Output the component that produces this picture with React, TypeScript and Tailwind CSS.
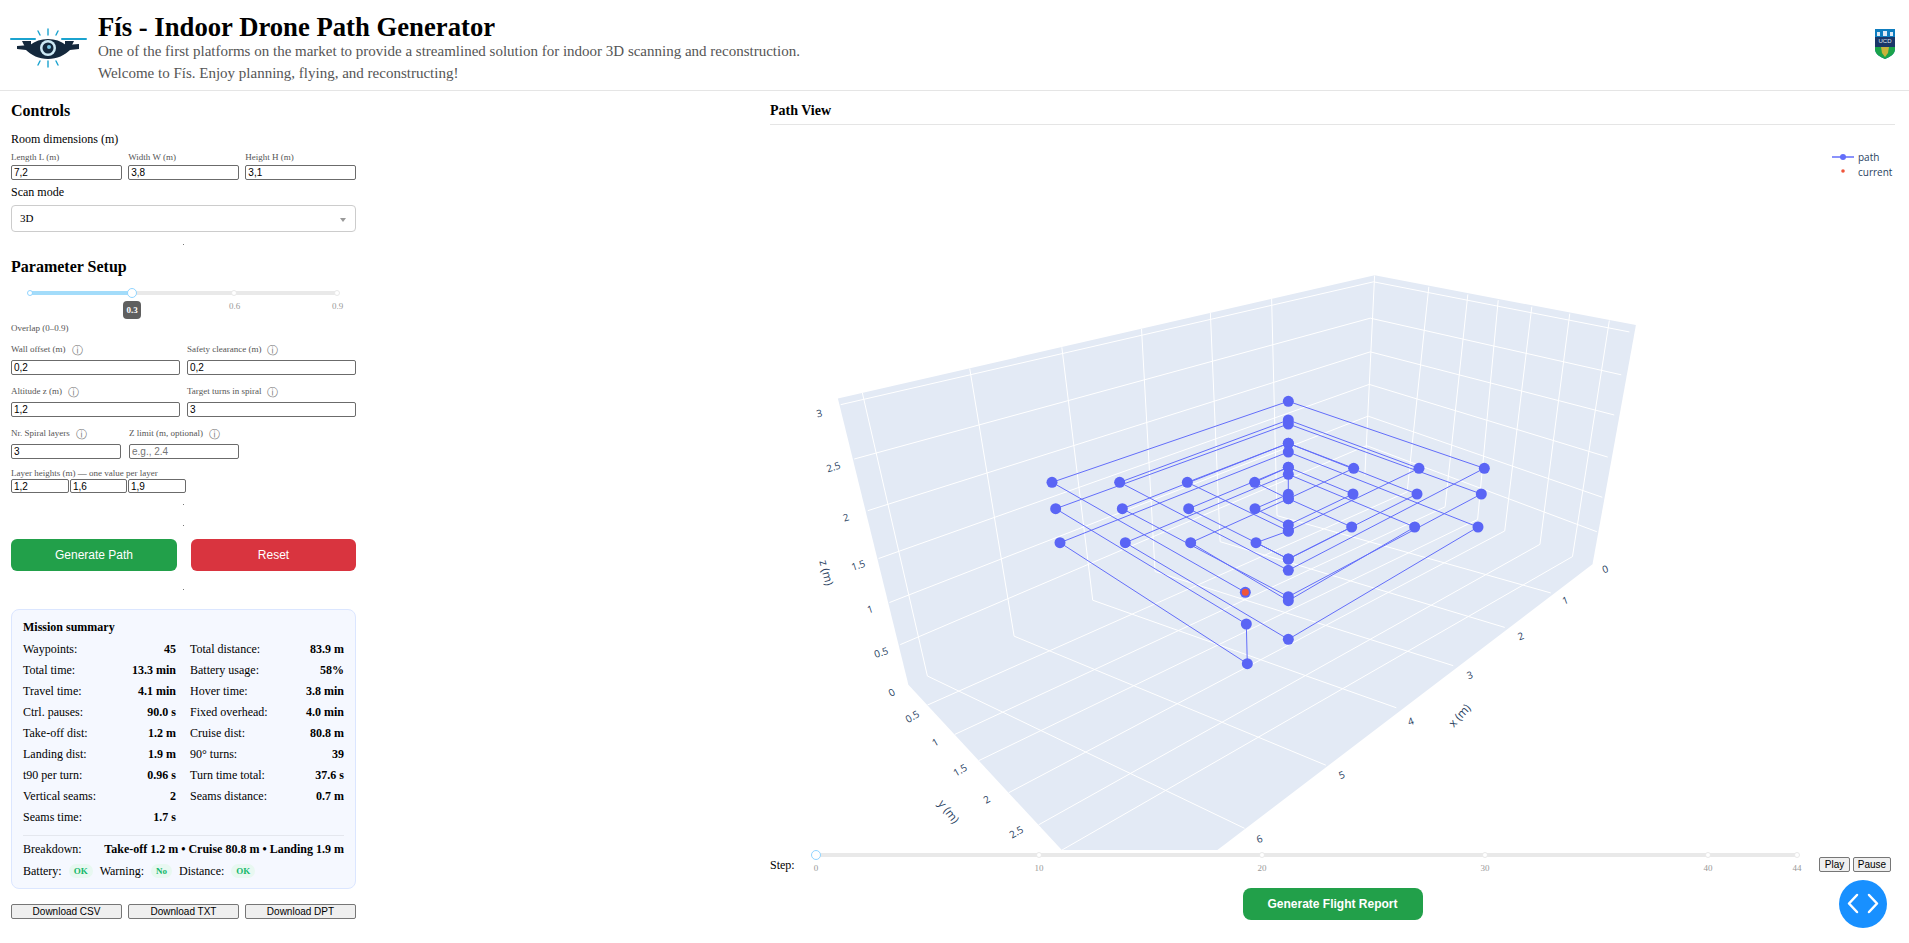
const zx = (x: number) => 800 + x / 1.8447;
const zy = (y: number) => 260 + y / 2.613;
const pts = (list: number[][]) => list.map(([x, y]) => `${zx(x).toFixed(1)},${zy(y).toFixed(1)}`).join(" ");
// spiral coordinates were read off the 3x crop of the plot
const px = (x: number) => 1000 + x / 3;
const py = (y: number) => 380 + y / 3;

const outline = [[70, 362], [1060, 40], [1542, 170], [1462, 795], [770, 1542], [483, 1542], [200, 1110]];
const back = [1042, 563];

const leftWallZ = [[[75, 378], [1058, 57]], [[100, 520], [1052, 152]], [[125, 655], [1052, 240]], [[145, 780], [1050, 325]], [[165, 895], [1048, 408]], [[185, 1005], [1045, 485]]];
const rightWallZ = [[[1058, 57], [1530, 188]], [[1052, 152], [1515, 300]], [[1052, 240], [1502, 405]], [[1050, 325], [1490, 515]], [[1048, 408], [1480, 620]], [[1045, 485], [1470, 710]]];
const leftWallV = [[[870, 100], [880, 668]], [[757, 138], [775, 736]], [[630, 180], [655, 814]], [[483, 228], [540, 889]], [[313, 283], [395, 983]], [[115, 347], [235, 1087]]];
const rightWallV = [[[1160, 70], [1120, 606]], [[1232, 90], [1190, 645]], [[1288, 105], [1250, 678]], [[1350, 122], [1300, 708]], [[1420, 140], [1365, 743]], [[1493, 158], [1425, 775]]];
const floorX = [[[880, 668], [1385, 870]], [[775, 736], [1300, 960]], [[655, 814], [1205, 1060]], [[540, 889], [1100, 1170]], [[395, 983], [970, 1320]], [[235, 1087], [820, 1485]]];
const floorY = [[[1120, 606], [235, 1163]], [[1190, 645], [285, 1240]], [[1250, 678], [330, 1308]], [[1300, 708], [385, 1392]], [[1365, 743], [440, 1476]], [[1425, 775], [483, 1542]]];
const gridLines = [...leftWallZ, ...rightWallZ, ...leftWallV, ...rightWallV, ...floorX, ...floorY, [[1060, 40], back]];

const top = [[736, 637], [156, 307], [865, 64], [1453, 265], [865, 571], [359, 307], [865, 120], [1257, 265], [865, 453], [562, 307], [865, 190], [1061, 265], [865, 356], [764, 307], [865, 262]];
const mid = [[865, 343], [765, 386], [865, 435], [1059, 342], [865, 262], [566, 386], [865, 537], [1251, 342], [865, 190], [367, 386], [865, 650], [1444, 342], [865, 132], [167, 386], [739, 732]];
const low = [[742, 851], [180, 488], [865, 216], [1434, 441], [865, 778], [376, 488], [865, 283], [1244, 441], [865, 662], [572, 488], [865, 356], [1055, 441], [865, 537], [768, 488], [865, 453]];
const path = [...top, ...mid, ...low];

const ticks: [string, number, number, number][] = [
  ["3", 36, 403, -12], ["2.5", 62, 543, -18], ["2", 85, 675, -18], ["1.5", 108, 800, -18], ["1", 130, 915, -18], ["0.5", 150, 1028, -18],
  ["0", 170, 1132, -30], ["0.5", 208, 1195, -30], ["1", 250, 1262, -30], ["1.5", 296, 1335, -30], ["2", 345, 1412, -30], ["2.5", 400, 1497, -30],
  ["0", 1486, 810, -20], ["1", 1412, 892, -20], ["2", 1330, 985, -20], ["3", 1236, 1087, -20], ["4", 1127, 1208, -20], ["5", 1000, 1348, -20], ["6", 848, 1515, -20],
];

function Plot() {
  return (
    <svg viewBox="770 125 1125 727" className="block w-[1125px] h-[727px]" style={{ fontFamily: "'Open Sans', sans-serif" }}>
      <defs>
        <clipPath id="scene">
          <polygon points={pts(outline)} />
        </clipPath>
      </defs>
      <polygon points={pts(outline)} fill="#e3eaf5" />
      <g clipPath="url(#scene)" stroke="#fff" strokeWidth="1" fill="none">
        {gridLines.map((l, i) => (
          <line key={i} x1={zx(l[0][0])} y1={zy(l[0][1])} x2={zx(l[1][0])} y2={zy(l[1][1])} />
        ))}
      </g>
      <polyline points={path.map(([x, y]) => `${px(x).toFixed(1)},${py(y).toFixed(1)}`).join(" ")} fill="none" stroke="#636efa" strokeWidth="1" />
      {path.map(([x, y], i) => (
        <circle key={i} cx={px(x)} cy={py(y)} r="5.500" fill="#5a65f5" />
      ))}
      <circle cx={px(736)} cy={py(637)} r="3.500" fill="#ef553b" />
      {ticks.map(([t, x, y, r], i) => (
        <text key={i} x={zx(x)} y={zy(y)} fontSize="10" fill="#2a3f5f" textAnchor="middle" dominantBaseline="middle" transform={`rotate(${r} ${zx(x)} ${zy(y)})`}>
          {t}
        </text>
      ))}
      <text x={zx(47)} y={zy(818)} fontSize="11.5" fill="#2a3f5f" textAnchor="middle" dominantBaseline="middle" transform={`rotate(75 ${zx(47)} ${zy(818)})`}>z (m)</text>
      <text x={zx(273)} y={zy(1443)} fontSize="11.5" fill="#2a3f5f" textAnchor="middle" dominantBaseline="middle" transform={`rotate(52 ${zx(273)} ${zy(1443)})`}>y (m)</text>
      <text x={zx(1218)} y={zy(1192)} fontSize="11.5" fill="#2a3f5f" textAnchor="middle" dominantBaseline="middle" transform={`rotate(-48 ${zx(1218)} ${zy(1192)})`}>x (m)</text>
      <line x1="1832" y1="157" x2="1854" y2="157" stroke="#636efa" strokeWidth="1.5" />
      <circle cx="1843" cy="157" r="3" fill="#636efa" />
      <text x="1858" y="161" fontSize="10" fill="#2a3f5f">path</text>
      <circle cx="1843" cy="171" r="1.8" fill="#ef553b" />
      <text x="1858" y="175.500" fontSize="10" fill="#2a3f5f">current</text>
    </svg>
  );
}

function Logo() {
  return (
    <svg viewBox="10 15 110 65" className="w-[110px] h-[65px] shrink-0" aria-label="Fís logo">
      <g stroke="#1ba3cf" strokeWidth="1.4" strokeLinecap="round">
        <path d="M21 39H45M72 39H96" strokeWidth="2" />
        <path d="M58 29v6M48 31l2 4M68 31l-2 4M58 61v6M48 65l2-4M68 65l-2-4M41 49l-3 1M75 49l3 1" />
      </g>
      <path d="M27 46l13-1c5-4 11-6 18-6s13 2 18 6l13-1v5l-9 1c-5 5-13 9-22 9s-17-4-22-9l-9-1z" fill="#14283c" />
      <path d="M32 41h9v6h-6zM84 41h-9v6h6z" fill="#14283c" />
      <circle cx="58" cy="48" r="8" fill="#cfeaf5" />
      <circle cx="58" cy="48" r="5.500" fill="#14283c" />
      <circle cx="59" cy="47" r="2" fill="#7cc8e4" />
    </svg>
  );
}

function Crest() {
  return (
    <svg viewBox="0 0 20 30" className="w-5 h-[30px] shrink-0" aria-label="UCD crest">
      <path d="M0 0H20V20C20 26 14 28 10 30C6 28 0 26 0 20Z" fill="#0f7dbf" />
      <rect y="8" width="20" height="10" fill="#1a3668" />
      <path d="M0 18H20V20C20 26 14 28 10 30C6 28 0 26 0 20Z" fill="#1ba34a" />
      <path d="M2 7V3h3v4zM8 7V2h4v5zM15 7V3h3v4z" fill="#dfeaf5" />
      <text x="10" y="14" fontSize="6" fill="#dfe7f2" textAnchor="middle" fontFamily="'Liberation Sans', sans-serif">UCD</text>
      <path d="M6 18h8l-1 6-3 4-3-4z" fill="#c9b33a" />
    </svg>
  );
}

function NumInput({ value, placeholder, className }: { value?: string; placeholder?: string; className: string }) {
  return (
    <input
      readOnly
      defaultValue={value}
      placeholder={placeholder}
      className={`block border border-[#6b6b6b] rounded-[2px] bg-white px-[2px] font-['Liberation_Sans',sans-serif] text-[10px] text-black placeholder:text-[#757575] outline-none ${className}`}
    />
  );
}

function Info() {
  return <span className="ml-[6px] text-[11px] text-[#777] leading-none">ⓘ</span>;
}

function Dot() {
  return <div className="h-[2px] flex justify-center w-[345px]"><span className="w-px h-px bg-[#777]" /></div>;
}

function Field({ label, value, placeholder, width }: { label: string; value?: string; placeholder?: string; width: string }) {
  return (
    <div>
      <div className="h-[16px] flex items-center text-[9px] text-[#555] whitespace-nowrap">
        {label}
        <Info />
      </div>
      <NumInput value={value} placeholder={placeholder} className={`mt-[2px] h-[15px] ${width}`} />
    </div>
  );
}

const rows = [
  ["Waypoints:", "45", "Total distance:", "83.9 m"],
  ["Total time:", "13.3 min", "Battery usage:", "58%"],
  ["Travel time:", "4.1 min", "Hover time:", "3.8 min"],
  ["Ctrl. pauses:", "90.0 s", "Fixed overhead:", "4.0 min"],
  ["Take-off dist:", "1.2 m", "Cruise dist:", "80.8 m"],
  ["Landing dist:", "1.9 m", "90° turns:", "39"],
  ["t90 per turn:", "0.96 s", "Turn time total:", "37.6 s"],
  ["Vertical seams:", "2", "Seams distance:", "0.7 m"],
  ["Seams time:", "1.7 s", "", ""],
];

function Badge({ children }: { children: string }) {
  return <span className="mx-[7px] px-[5px] h-[14px] leading-[14px] rounded-full bg-[#e8f8f1] text-[#12b76a] text-[9px] font-bold">{children}</span>;
}

function Summary() {
  return (
    <div className="mt-[18px] w-[345px] h-[280px] rounded-lg border border-[#dbe6ff] bg-[#f5f8ff] px-[11px] pt-[9px] text-[12px] text-black">
      <div className="font-bold h-[16px] leading-[16px]">Mission summary</div>
      <div className="mt-[3.500px] grid grid-cols-[153px_154px] gap-x-[14px]">
        {rows.map((r) => (
          <div key={r[0]} className="contents">
            <div className="h-[21px] flex justify-between items-center">
              <span>{r[0]}</span>
              <b>{r[1]}</b>
            </div>
            <div className="h-[21px] flex justify-between items-center">
              <span>{r[2]}</span>
              <b>{r[3]}</b>
            </div>
          </div>
        ))}
      </div>
      <div className="mt-[7.500px] h-px bg-[#e4e7ee]" />
      <div className="mt-[4px] h-[18px] flex justify-between items-center">
        <span>Breakdown:</span>
        <b>Take-off 1.2 m • Cruise 80.8 m • Landing 1.9 m</b>
      </div>
      <div className="mt-[4px] h-[18px] flex items-center">
        <span>Battery:</span>
        <Badge>OK</Badge>
        <span>Warning:</span>
        <Badge>No</Badge>
        <span>Distance:</span>
        <Badge>OK</Badge>
      </div>
    </div>
  );
}

function Controls() {
  return (
    <div className="w-[345px]">
      <h2 className="text-[16px] font-bold leading-[20px] pt-[10px] box-content">Controls</h2>
      <p className="mt-[10px] text-[12px] leading-[16px]">Room dimensions (m)</p>
      <div className="mt-[3px] flex gap-[6.500px]">
        {[["Length L (m)", "7,2"], ["Width W (m)", "3,8"], ["Height H (m)", "3,1"]].map(([l, v]) => (
          <div key={l} className="flex-1">
            <div className="h-[14px] leading-[14px] text-[9px] text-[#555]">{l}</div>
            <NumInput value={v} className="w-full mt-[1px] h-[15px]" />
          </div>
        ))}
      </div>
      <p className="mt-[4px] text-[12px] leading-[16px]">Scan mode</p>
      <div className="mt-[5px] h-[27px] border border-[#ccc] rounded flex items-center justify-between pl-[8px] pr-[9px] text-[11px] font-normal">
        <span>3D</span>
        <span className="w-0 h-0 border-x-[3px] border-x-transparent border-t-[4px] border-t-[#999] mt-[2px]" />
      </div>
      <div className="mt-[12px]"><Dot /></div>
      <h2 className="mt-[11px] text-[16px] font-bold leading-[20px]">Parameter Setup</h2>
      <div className="relative mt-[11px] h-[50px] text-[9px] leading-[12px] text-[#999]">
        <div className="absolute left-[19px] w-[307px] top-[3px] h-[4px] rounded bg-[#e9e9e9]" />
        <div className="absolute left-[19px] w-[102px] top-[3px] h-[4px] rounded bg-[#a3dcfa]" />
        <div className="absolute left-[16px] top-[2px] w-[6px] h-[6px] rounded-full border border-[#91d5ff] bg-white" />
        <div className="absolute left-[220px] top-[2px] w-[6px] h-[6px] rounded-full border border-[#e9e9e9] bg-white" />
        <div className="absolute left-[323px] top-[2px] w-[6px] h-[6px] rounded-full border border-[#e9e9e9] bg-white" />
        <div className="absolute left-[116px] top-0 w-[10px] h-[10px] rounded-full border border-[#91d5ff] bg-white" />
        <div className="absolute left-[112px] top-[13px] w-[18px] h-[18px] rounded-[4px] bg-[#5f5f5f] text-white text-center text-[9px] font-bold leading-[18px]">0.3</div>
        <span className="absolute left-[218px] top-[12px]">0.6</span>
        <span className="absolute left-[321px] top-[12px]">0.9</span>
      </div>
      <p className="text-[9px] leading-[12px] text-[#555] mt-[-16px]">Overlap (0–0.9)</p>
      <div className="mt-[8px] grid grid-cols-[169px_169px] gap-x-[7px] gap-y-[9px]">
        <Field label="Wall offset (m)" value="0,2" width="w-full" />
        <Field label="Safety clearance (m)" value="0,2" width="w-full" />
        <Field label="Altitude z (m)" value="1,2" width="w-full" />
        <Field label="Target turns in spiral" value="3" width="w-full" />
      </div>
      <div className="mt-[9px] flex gap-[8px]">
        <div className="w-[110px]"><Field label="Nr. Spiral layers" value="3" width="w-[110px]" /></div>
        <div className="w-[110px]"><Field label="Z limit (m, optional)" placeholder="e.g., 2.4" width="w-[110px]" /></div>
      </div>
      <p className="mt-[8px] text-[9px] leading-[12px] text-[#555]">Layer heights (m) — one value per layer</p>
      <div className="flex gap-px">
        <NumInput value="1,2" className="w-[58px] h-[14px]" />
        <NumInput value="1,6" className="w-[57px] h-[14px]" />
        <NumInput value="1,9" className="w-[58px] h-[14px]" />
      </div>
      <div className="mt-[11px]"><Dot /></div>
      <div className="mt-[19px]"><Dot /></div>
      <div className="mt-[12px] flex justify-between font-['Liberation_Sans',sans-serif] text-[12px] text-white">
        <button className="w-[166px] h-[32px] rounded-md bg-[#22a04a]">Generate Path</button>
        <button className="w-[165px] h-[32px] rounded-md bg-[#d9343f]">Reset</button>
      </div>
      <div className="mt-[18px]"><Dot /></div>
      <Summary />
      <div className="mt-[15px] flex justify-between">
        {["Download CSV", "Download TXT", "Download DPT"].map((t) => (
          <button key={t} className="w-[111px] h-[15px] bg-[#efefef] border border-[#767676] rounded-[2px] font-['Liberation_Sans',sans-serif] text-[10px] leading-none">{t}</button>
        ))}
      </div>
    </div>
  );
}

function StepSlider() {
  const marks = [["0", 46], ["10", 269], ["20", 492], ["30", 715], ["40", 938], ["44", 1027]] as const;
  return (
    <div className="mt-[1px] flex items-start h-[35px]">
      <div className="relative w-[1049px] h-[30px] shrink-0">
        <span className="absolute left-0 top-[4px] text-[12px] leading-[16px]">Step:</span>
        <div className="absolute left-[46px] w-[982px] top-0 h-[4px] bg-[#e9e9e9] rounded" />
        {marks.slice(1).map(([t, x]) => (
          <div key={t} className="absolute top-[-1px] w-[6px] h-[6px] rounded-full border border-[#e9e9e9] bg-white -ml-[3px]" style={{ left: x }} />
        ))}
        <div className="absolute left-[41px] top-[-3px] w-[10px] h-[10px] rounded-full border border-[#91d5ff] bg-white" />
        {marks.map(([t, x]) => (
          <span key={t} className="absolute top-[9px] -translate-x-1/2 text-[9px] leading-[12px] text-[#999]" style={{ left: x }}>{t}</span>
        ))}
      </div>
      <div className="flex gap-[3px] mt-[4px] font-['Liberation_Sans',sans-serif] text-[10px]">
        <button className="w-[31px] h-[15px] bg-[#efefef] border border-[#767676] rounded-[2px] leading-none">Play</button>
        <button className="w-[38px] h-[15px] bg-[#efefef] border border-[#767676] rounded-[2px] leading-none">Pause</button>
      </div>
    </div>
  );
}

export default function App() {
  return (
    <div className="relative w-[1909px] h-[943px] overflow-hidden bg-white text-black font-['Liberation_Serif',serif]">
      <header className="h-[91px] border-b border-[#e5e5e5] flex items-start pt-[10px] pr-[14px]">
        <div className="mt-[5px]"><Logo /></div>
        <div className="ml-[-12px] flex-1">
          <h1 className="text-[26.700px] font-bold leading-[34px]">Fís - Indoor Drone Path Generator</h1>
          <p className="text-[15px] leading-[22px] text-[#555] mt-[-4px]">One of the first platforms on the market to provide a streamlined solution for indoor 3D scanning and reconstruction.</p>
          <p className="text-[15px] leading-[22px] text-[#555]">Welcome to Fís. Enjoy planning, flying, and reconstructing!</p>
        </div>
        <div className="mt-[19px]"><Crest /></div>
      </header>
      <main className="grid grid-cols-[759px_1125px] pl-[11px]">
        <Controls />
        <section>
          <h2 className="pt-[10px] text-[14px] font-bold leading-[20px] border-b border-[#e5e5e5] h-[34px]">Path View</h2>
          <Plot />
          <StepSlider />
          <div className="flex justify-center">
            <button className="w-[180px] h-[32px] rounded-lg bg-[#22a04a] text-white font-['Liberation_Sans',sans-serif] text-[12px] font-bold">Generate Flight Report</button>
          </div>
        </section>
      </main>
      <button className="absolute left-[1839px] top-[880px] w-[48px] h-[48px] rounded-full bg-[#1890ff]" aria-label="toggle">
        <svg viewBox="0 0 48 48" className="w-12 h-12" fill="none" stroke="#fff" strokeWidth="2.500" strokeLinecap="round" strokeLinejoin="round">
          <path d="M18 15L10 23.500L18 32M30 15L38 23.500L30 32" />
        </svg>
      </button>
    </div>
  );
}
